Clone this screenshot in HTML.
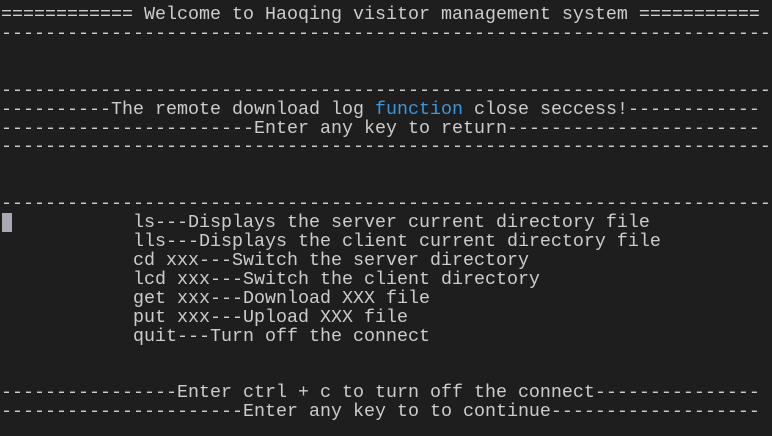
<!DOCTYPE html>
<html><head><meta charset="utf-8"><style>
html,body{margin:0;padding:0;background:#1e1e1e;width:772px;height:436px;overflow:hidden}
pre{margin:0;position:absolute;left:1px;top:6px;font-family:"Liberation Mono",monospace;font-size:18.33px;line-height:18.92px;color:#cccccc;white-space:pre}
.c{color:#3a96dd}
.cur{position:absolute;left:2px;top:213px;width:10px;height:19px;background:#a9a9b4}
</style></head><body>
<pre>============ Welcome to Haoqing visitor management system ===========
----------------------------------------------------------------------


----------------------------------------------------------------------
----------The remote download log <span class="c">function</span> close seccess!------------
-----------------------Enter any key to return-----------------------
----------------------------------------------------------------------


----------------------------------------------------------------------
            ls---Displays the server current directory file
            lls---Displays the client current directory file
            cd xxx---Switch the server directory
            lcd xxx---Switch the client directory
            get xxx---Download XXX file
            put xxx---Upload XXX file
            quit---Turn off the connect


----------------Enter ctrl + c to turn off the connect---------------
----------------------Enter any key to to continue-------------------</pre>
<div class="cur"></div>
</body></html>
